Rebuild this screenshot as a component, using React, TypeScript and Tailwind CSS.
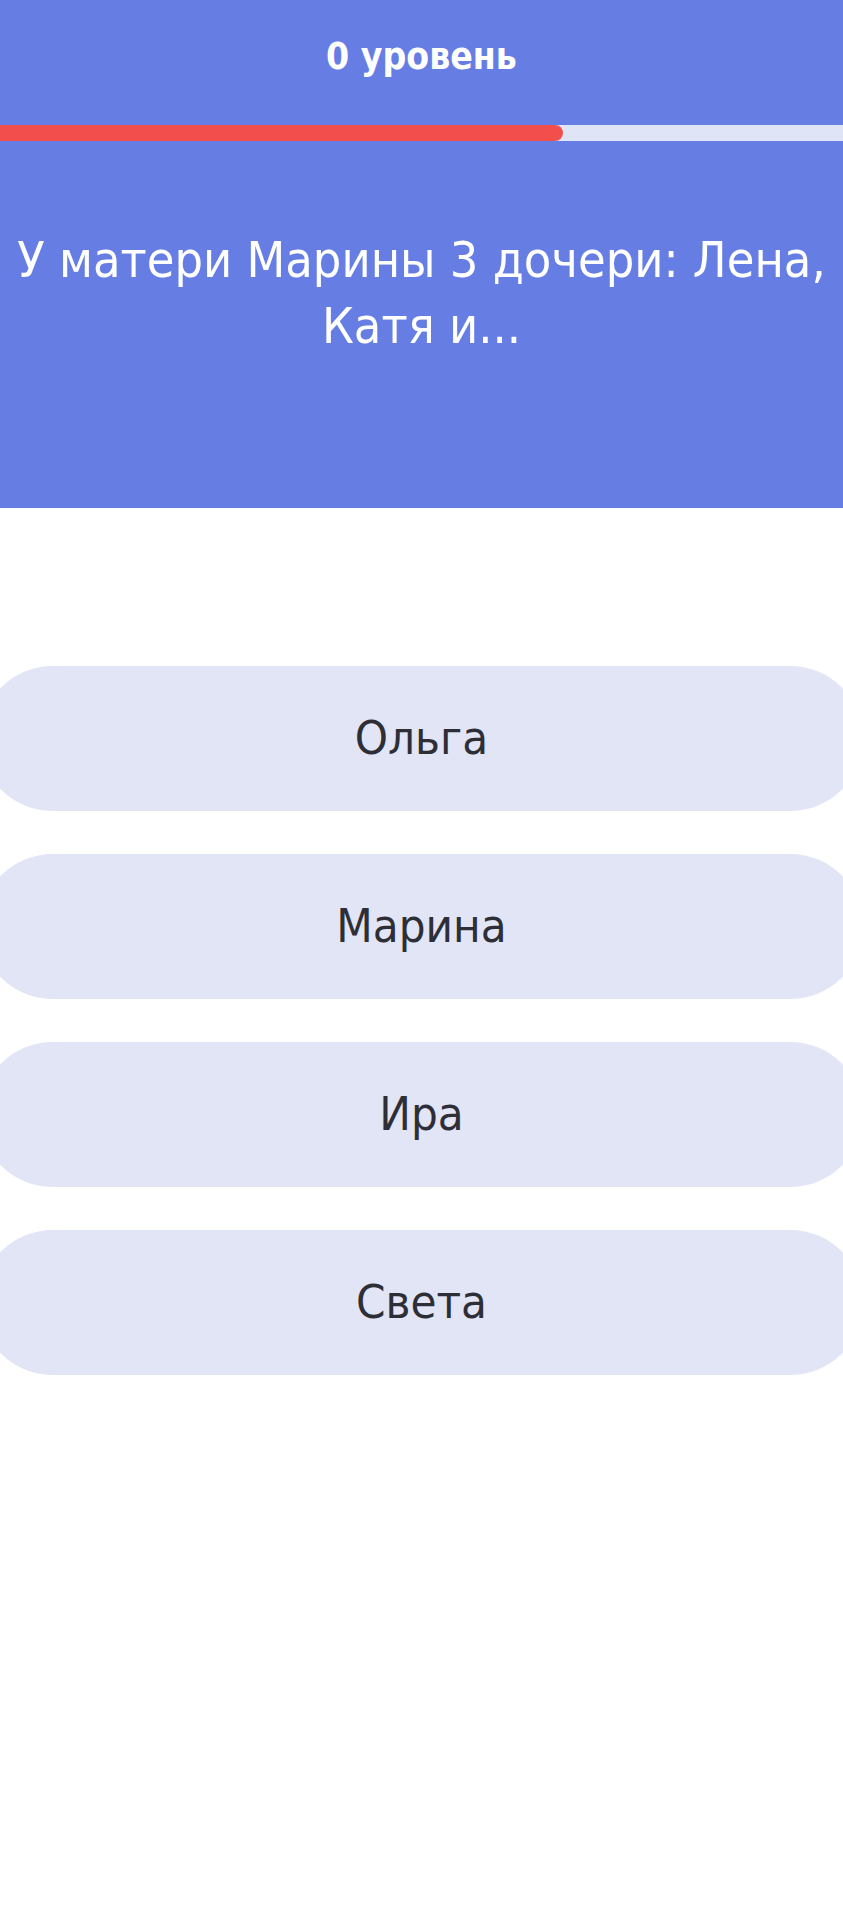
import React from "react";

const answers = ["Ольга", "Марина", "Ира", "Света"];

const font = "font-['DejaVu_Sans_Condensed','DejaVu_Sans',sans-serif]";

const ProgressBar = ({ value }: { value: number }) => {
  return (
    <div className="w-full h-[16px] bg-[#dfe4f7]">
      <div
        className="h-full bg-[#f24e4c] rounded-r-full"
        style={{ width: `${value}%` }}
      />
    </div>
  );
};

const AnswerButton = ({ label }: { label: string }) => {
  return (
    <button
      className={`
        w-[883px]
        -ml-[20px]
        h-[145px]
        shrink-0
        rounded-full
        bg-[#e2e5f6]
        flex
        items-center
        justify-center
        text-[47px]
        text-[#2e2f36]
        ${font}
      `}
    >
      {label}
    </button>
  );
};

export default function App() {
  return (
    <div className={`min-h-screen w-full bg-white overflow-x-hidden ${font}`}>
      <header className="h-[508px] bg-[#667ee4] flex flex-col">
        <h1 className="pt-[37px] leading-[40px] text-center text-[37px] font-bold text-white">
          0 уровень
        </h1>
        <div className="mt-[48px]">
          <ProgressBar value={66.8} />
        </div>
        <p className="pt-[86px] px-[8px] text-center text-[50px] leading-[66px] text-white">
          У матери Марины 3 дочери: Лена, Катя и...
        </p>
      </header>

      <div className="mt-[158px] flex flex-col gap-[43px]">
        {answers.map((answer) => (
          <AnswerButton key={answer} label={answer} />
        ))}
      </div>
    </div>
  );
}
